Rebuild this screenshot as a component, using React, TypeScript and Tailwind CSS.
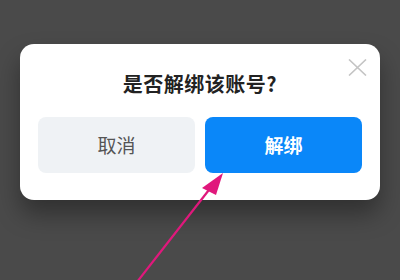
export default function App() {
  return (
    <div
      className="relative w-[400px] h-[280px] overflow-hidden bg-[#4a4a4a] px-[20px] pt-[44px]"
      style={{ fontFamily: '"Noto Sans CJK SC", "Noto Sans", sans-serif' }}
    >
      {/* Dialog */}
      <div className="relative w-[360px] rounded-[14px] bg-white px-[18px] pt-[26px] pb-[27px] shadow-[0_14px_24px_rgba(0,0,0,0.35)]">
        <button className="absolute left-[328px] top-[15px] w-[19px] h-[17px]">
          <svg viewBox="0 0 19 17" className="w-full h-full" fill="none" stroke="#c4c4c4" strokeWidth="1.6">
            <path d="M1 0.5 L18 16.5 M18 0.5 L1 16.5" />
          </svg>
        </button>
        <h2 className="text-center text-[20px] leading-[28px] font-bold text-[#222] tracking-[0.5px]">
          是否解绑该账号?
        </h2>
        <div className="mt-[19px] flex gap-[10px]">
          <button className="flex-1 h-[56px] rounded-[8px] bg-[#eff2f5] text-[19px] text-[#555]">
            取消
          </button>
          <button className="flex-1 h-[56px] rounded-[8px] bg-[#0a87f9] text-[19px] font-bold text-white">
            解绑
          </button>
        </div>
      </div>

      {/* Annotation arrow */}
      <svg className="absolute inset-0 pointer-events-none" width="400" height="280" viewBox="0 0 400 280">
        <line x1="137" y1="282" x2="212" y2="186" stroke="#e0187c" strokeWidth="2.2" />
        <polygon points="223,173 202,188 216,195" fill="#e0187c" />
      </svg>
    </div>
  );
}
